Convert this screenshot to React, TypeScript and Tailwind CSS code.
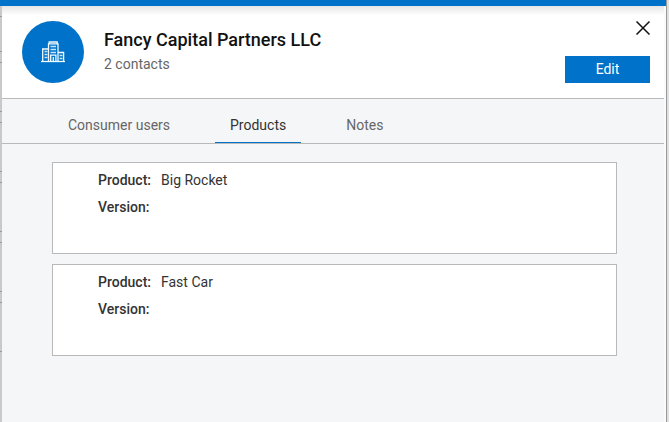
import { useState } from 'react';

interface Product {
  name: string;
  version: string;
}

const TABS = ['Consumer users', 'Products', 'Notes'];

const PRODUCTS: Product[] = [
  { name: 'Big Rocket', version: '' },
  { name: 'Fast Car', version: '' }
];

const BACKGROUND_ROWS = [0, 1, 2, 3, 4];

function BuildingIcon() {
  return (
    <svg width="24" height="22" viewBox="0 0 24 22" fill="none" stroke="#f2fbff" strokeWidth="1.3" aria-hidden="true">
      <path d="M0 20.5h24" />
      <path d="M7.5 20.500V2.8h9.500V20.500M8.200 2.800V1h8v1.800" />
      <path d="M7.500 8H1.700v12.500M17 11.500h5.600v9" />
      <g stroke="#bfe6fb">
        <path d="M9.500 5.500h5.500M9.500 8.500h5.500M9.500 11.500h5.500" />
        <path d="M3.500 10.500h3M3.500 13.500h3M3.500 16.500h3M18.500 14.500h3M18.500 17.500h3" />
      </g>
      <path d="M9.700 20.500v-6.300h5.200v6.300M12.300 16v4.500" />
    </svg>
  );
}

function CloseIcon() {
  return (
    <svg width="14" height="14" viewBox="0 0 14 14" stroke="#111" strokeWidth="1.5" aria-hidden="true">
      <path d="M0.500 0.500l13 13M13.500 0.500l-13 13" />
    </svg>
  );
}

function ProductCard({ product }: { product: Product }) {
  return (
    <article className="min-h-[92px] border border-[#b9b9b9] bg-white px-[45px] py-1">
      <dl className="text-sm leading-[27px] text-[#333]">
        <div className="flex gap-2.5">
          <dt className="font-medium">Product:</dt>
          <dd>{product.name}</dd>
        </div>
        <div className="flex gap-2.5">
          <dt className="font-medium">Version:</dt>
          <dd>{product.version}</dd>
        </div>
      </dl>
    </article>
  );
}

export default function App() {
  const [activeTab, setActiveTab] = useState('Products');

  return (
    <div className="flex h-screen overflow-hidden bg-[#e0e0e0] font-[Roboto,sans-serif]">
      <div className="flex min-w-0 flex-1 flex-col">
        <div className="h-1.5 shrink-0 bg-[#0072c9]" />

        <div className="flex min-h-0 flex-1">
          {/* edge of the list behind the panel */}
          <div className="flex w-0.5 shrink-0 flex-col gap-2.5 overflow-hidden bg-[#c9c9c9]">
            <div className="shrink-0">
              <div className="h-[11px] border-b border-[#999]" />
              <div className="h-[35px] border-b border-[#999]" />
            </div>
            {BACKGROUND_ROWS.map(row => (
              <div key={row} className="h-[50px] shrink-0 border-y border-[#999]" />
            ))}
          </div>

          <main className="flex min-w-0 flex-1 flex-col border-r-2 border-[#fafafa] bg-[#f5f6f8]">
            <header className="flex justify-between border-b border-[#b9b9b9] bg-white bg-linear-to-b from-[#e6e6e6] to-white to-10% pr-3.5 pl-5">
              <div className="flex gap-5 py-[15px]">
                <div className="flex size-[62px] items-center justify-center rounded-full bg-[#0072c9]">
                  <BuildingIcon />
                </div>
                <div className="pt-[7px]">
                  <h1 className="text-lg leading-6 font-medium text-[#111]">Fancy Capital Partners LLC</h1>
                  <p className="text-sm leading-6 text-[#666]">2 contacts</p>
                </div>
              </div>
              <div className="flex flex-col items-end justify-between py-[15px]">
                <button type="button" aria-label="Close">
                  <CloseIcon />
                </button>
                <button type="button" className="w-[85px] bg-[#0072c9] text-sm leading-[27px] text-white">
                  Edit
                </button>
              </div>
            </header>

            <nav className="flex gap-[30px] border-b border-[#b9b9b9] px-[51px]" role="tablist">
              {TABS.map(tab => (
                <button
                  key={tab}
                  type="button"
                  role="tab"
                  aria-selected={tab === activeTab}
                  onClick={() => setActiveTab(tab)}
                  className={
                    tab === activeTab
                      ? 'h-11 border-b border-[#0072c9] px-[15px] pt-2 text-sm text-[#333]'
                      : 'h-11 border-b border-transparent px-[15px] pt-2 text-sm text-[#666]'
                  }
                >
                  {tab}
                </button>
              ))}
            </nav>

            <section className="flex flex-col gap-2.5 pt-[18px] pr-[47px] pl-[50px]">
              {PRODUCTS.map(product => (
                <ProductCard key={product.name} product={product} />
              ))}
            </section>
          </main>
        </div>
      </div>
      <div className="w-[3px] shrink-0 border-l border-[#999]" />
    </div>
  );
}
